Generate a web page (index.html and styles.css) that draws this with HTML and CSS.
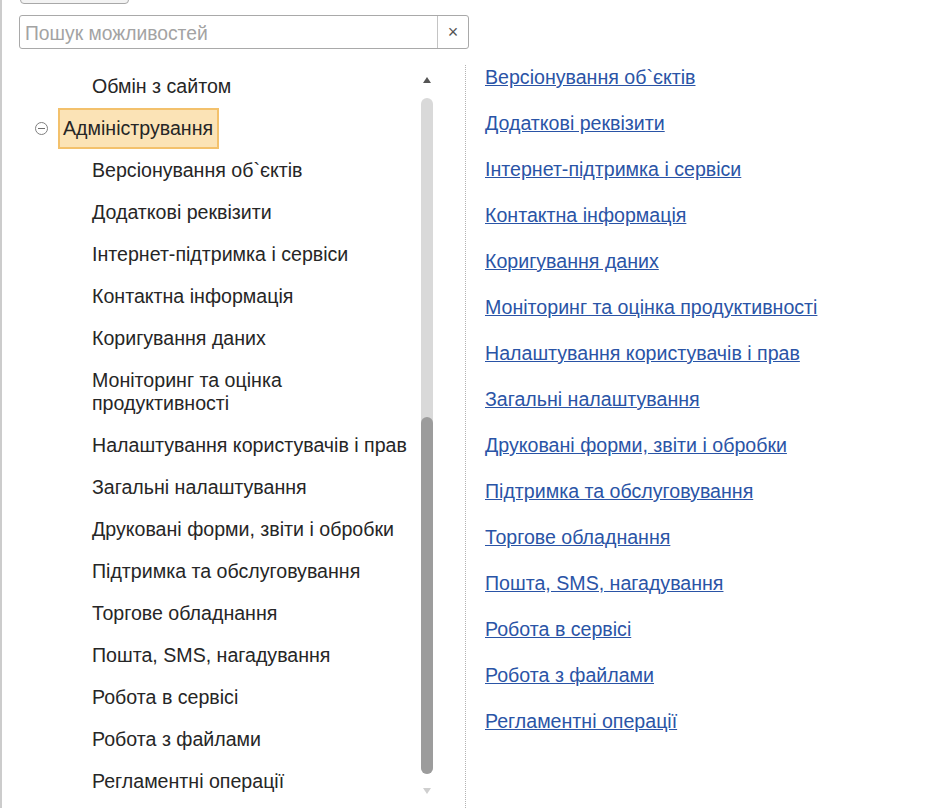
FILE: index.html
```html
<!DOCTYPE html>
<html lang="uk">
<head>
  <meta charset="UTF-8">
  <meta name="viewport" content="width=device-width, initial-scale=1.0">
  <title>Адміністрування</title>
  <link rel="stylesheet" href="styles.css">
</head>
<body>
  <div class="page">
    <div class="toolbar">
      <button class="tool-btn" type="button"></button>
    </div>

    <div class="search">
      <input type="text" class="search-input" placeholder="Пошук можливостей">
      <button class="search-clear" type="button">&times;</button>
    </div>

    <div class="main">
      <div class="tree-panel">
        <ul class="tree">
          <li class="tree-item">Обмін з сайтом</li>
          <li class="tree-group">
            <span class="collapse-icon"></span>
            <span class="group-label">Адміністрування</span>
          </li>
          <li class="tree-item">Версіонування об`єктів</li>
          <li class="tree-item">Додаткові реквізити</li>
          <li class="tree-item">Інтернет-підтримка і сервіси</li>
          <li class="tree-item">Контактна інформація</li>
          <li class="tree-item">Коригування даних</li>
          <li class="tree-item">Моніторинг та оцінка продуктивності</li>
          <li class="tree-item">Налаштування користувачів і прав</li>
          <li class="tree-item">Загальні налаштування</li>
          <li class="tree-item">Друковані форми, звіти і обробки</li>
          <li class="tree-item">Підтримка та обслуговування</li>
          <li class="tree-item">Торгове обладнання</li>
          <li class="tree-item">Пошта, SMS, нагадування</li>
          <li class="tree-item">Робота в сервісі</li>
          <li class="tree-item">Робота з файлами</li>
          <li class="tree-item">Регламентні операції</li>
        </ul>

        <div class="scrollbar">
          <div class="scroll-arrow"><span class="arrow-up"></span></div>
          <div class="scroll-track">
            <div class="scroll-thumb"></div>
          </div>
          <div class="scroll-arrow"><span class="arrow-down"></span></div>
        </div>
      </div>

      <div class="links-panel">
        <a href="#" class="link">Версіонування об`єктів</a>
        <a href="#" class="link">Додаткові реквізити</a>
        <a href="#" class="link">Інтернет-підтримка і сервіси</a>
        <a href="#" class="link">Контактна інформація</a>
        <a href="#" class="link">Коригування даних</a>
        <a href="#" class="link">Моніторинг та оцінка продуктивності</a>
        <a href="#" class="link">Налаштування користувачів і прав</a>
        <a href="#" class="link">Загальні налаштування</a>
        <a href="#" class="link">Друковані форми, звіти і обробки</a>
        <a href="#" class="link">Підтримка та обслуговування</a>
        <a href="#" class="link">Торгове обладнання</a>
        <a href="#" class="link">Пошта, SMS, нагадування</a>
        <a href="#" class="link">Робота в сервісі</a>
        <a href="#" class="link">Робота з файлами</a>
        <a href="#" class="link">Регламентні операції</a>
      </div>
    </div>
  </div>
</body>
</html>
```

FILE: styles.css
```css
body {
    margin: 0;
    padding: 0;
    background-color: #ffffff;
    font-family: "Liberation Sans", Arial, sans-serif;
    color: #262626;
    overflow: hidden;
}

.page {
    border-left: 2px solid #cccccc;
    height: 100vh;
    box-sizing: border-box;
}

.toolbar {
    height: 4px;
    overflow: hidden;
    display: flex;
    align-items: flex-end;
}

.tool-btn {
    width: 109px;
    height: 28px;
    margin-left: 18px;
    border: 1px solid #a8a8a8;
    border-radius: 4px;
    background-color: #f3f3f3;
}

.search {
    display: flex;
    width: 450px;
    height: 34px;
    margin: 11px 0 0 17px;
    border: 1px solid #a9a9a9;
    border-radius: 3px;
    box-sizing: border-box;
}

.search-input {
    flex: 1;
    min-width: 0;
    border: none;
    outline: none;
    padding: 3px 5px 0;
    font-family: "Liberation Sans", Arial, sans-serif;
    font-size: 19.3px;
    color: #333;
    background: transparent;
}

.search-input::placeholder {
    color: #a3a3a3;
}

.search-clear {
    width: 31px;
    border: none;
    border-left: 1px solid #c4c4c4;
    background: transparent;
    color: #555;
    font-family: "Liberation Sans", Arial, sans-serif;
    font-size: 18px;
    padding: 0;
}

.main {
    display: flex;
    margin-top: 16px;
    height: calc(100vh - 65px);
    overflow: hidden;
}

.tree-panel {
    display: flex;
    width: 464px;
    border-right: 1px dotted #b3b3b3;
    box-sizing: border-box;
    padding-right: 32px;
}

.tree {
    flex: 1;
    list-style: none;
    margin: 0;
    padding: 0;
    font-size: 19.6px;
    line-height: 23px;
}

.tree-item {
    padding: 10px 4px 9px 90px;
}

.tree-group {
    display: flex;
    align-items: center;
    height: 42px;
}

.collapse-icon {
    width: 11px;
    height: 11px;
    margin-left: 33px;
    border: 1px solid #808080;
    border-radius: 50%;
    display: flex;
    align-items: center;
    justify-content: center;
}

.collapse-icon::after {
    content: "";
    width: 7px;
    height: 1px;
    background-color: #6e6e6e;
}

.group-label {
    margin-left: 10px;
    padding: 0 4px 0 3px;
    line-height: 37px;
    border: 2px solid #f3c16c;
    background-color: #fbe3b6;
    color: #262626;
}

.scrollbar {
    width: 12px;
    display: flex;
    flex-direction: column;
}

.scroll-arrow {
    height: 30px;
    display: flex;
    align-items: center;
    justify-content: center;
}

.scroll-arrow:last-child {
    height: 34px;
}

.arrow-up {
    border-left: 4px solid transparent;
    border-right: 4px solid transparent;
    border-bottom: 6px solid #555555;
}

.arrow-down {
    border-left: 4px solid transparent;
    border-right: 4px solid transparent;
    border-top: 6px solid #cfcfcf;
}

.scroll-track {
    height: 677px;
    margin-top: 3px;
    background-color: #d9d9d9;
    border-radius: 6px;
    display: flex;
    flex-direction: column;
}

.scroll-thumb {
    margin-top: auto;
    height: 357px;
    background-color: #9c9c9c;
    border-radius: 6px;
}

.links-panel {
    display: flex;
    flex-direction: column;
    align-items: flex-start;
    gap: 23px;
    padding: 1px 0 0 19px;
    font-size: 19.6px;
    line-height: 23px;
}

.link {
    color: #2a54a6;
    text-decoration: underline;
}
```
